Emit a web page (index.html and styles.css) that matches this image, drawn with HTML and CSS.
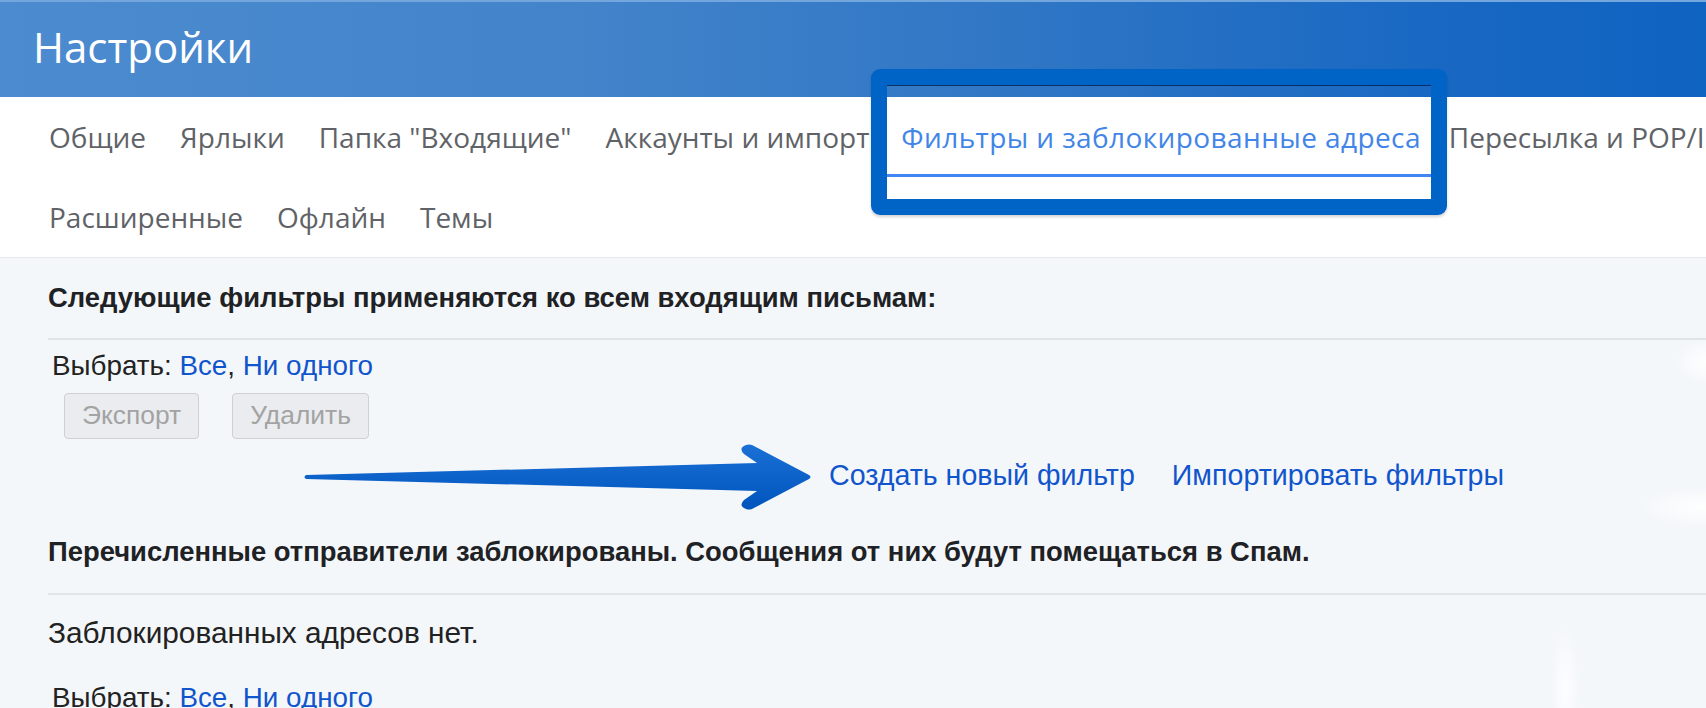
FILE: index.html
```html
<!DOCTYPE html>
<html lang="ru">
<head>
<meta charset="utf-8">
<title>Настройки</title>
<link rel="stylesheet" href="styles.css">
</head>
<body>
<div class="page">
  <header class="topbar">
    <h1 class="title">Настройки</h1>
  </header>
  <nav class="tabs">
    <div class="tab-row">
      <span class="tab">Общие</span>
      <span class="tab">Ярлыки</span>
      <span class="tab">Папка "Входящие"</span>
      <span class="tab">Аккаунты и импорт</span>
      <span class="tab active">Фильтры и заблокированные адреса</span>
      <span class="tab">Пересылка и POP/IMAP</span>
      <span class="tab">Чат и Meet</span>
    </div>
    <div class="tab-row">
      <span class="tab">Расширенные</span>
      <span class="tab">Офлайн</span>
      <span class="tab">Темы</span>
    </div>
  </nav>
  <main class="content">
    <section class="block">
      <h2 class="block-title">Следующие фильтры применяются ко всем входящим письмам:</h2>
      <div class="select">Выбрать: <a class="link">Все</a>, <a class="link">Ни одного</a></div>
      <div class="actions">
        <button class="btn" disabled>Экспорт</button>
        <button class="btn" disabled>Удалить</button>
      </div>
      <div class="links">
        <a class="link">Создать новый фильтр</a>
        <a class="link">Импортировать фильтры</a>
      </div>
    </section>
    <section class="block second">
      <h2 class="block-title">Перечисленные отправители заблокированы. Сообщения от них будут помещаться в Спам.</h2>
      <div class="empty">Заблокированных адресов нет.</div>
      <div class="select last">Выбрать: <a class="link">Все</a>, <a class="link">Ни одного</a></div>
    </section>
  </main>

  <div class="highlight"></div>
  <svg class="arrow" width="520" height="80" viewBox="0 0 520 80" aria-hidden="true">
    <defs>
      <linearGradient id="ag" x1="0" y1="0" x2="0" y2="1">
        <stop offset="0" stop-color="#1b70d6"/>
        <stop offset="1" stop-color="#0055bd"/>
      </linearGradient>
    </defs>
    <path fill="url(#ag)" d="M6,37 L457,25 L444,16 Q438,10 446,7 Q449,6 452,7 L509,37 Q512,39 509,41 L452,71 Q449,72 446,71 Q438,68 444,62 L457,53 L6,41 Q3,39 6,37 Z"/>
  </svg>
</div>
</body>
</html>
```

FILE: styles.css
```css
html, body {
  margin: 0;
  padding: 0;
}

body {
  width: 1706px;
  height: 708px;
  overflow: hidden;
  background: #f4f7fa;
  font-family: "Liberation Sans", Arial, Helvetica, sans-serif;
}

.page {
  position: relative;
  width: 1706px;
  height: 708px;
  overflow: hidden;
}

.topbar {
  height: 97px;
  box-sizing: border-box;
  padding: 26px 0 0 33px;
  background: linear-gradient(90deg, #4c8bcf 0%, #4283ca 35%, #2f76c5 60%, #1a69c3 82%, #0f63c1 100%);
  border-top: 2px solid #73a6dc;
}

.title {
  margin: -2px 0 0;
  font-family: "Open Sans", Roboto, sans-serif;
  font-weight: 400;
  font-size: 42px;
  line-height: 42px;
  color: #ffffff;
}

.tabs {
  background: #ffffff;
  padding-left: 32px;
  box-shadow: 0 1px 0 #e6e9ed;
  position: relative;
}

.tab-row {
  display: flex;
  height: 80px;
  white-space: nowrap;
}

.tab {
  flex: none;
  padding: 0 17px;
  font-family: "Open Sans", Roboto, sans-serif;
  font-size: 28px;
  line-height: 80px;
  color: #5f6368;
}

.tab.active {
  padding: 0 11px 0 15px;
  letter-spacing: 0.4px;
  color: #4285e8;
  box-shadow: inset 0 -3px 0 #4285f4;
}

.content {
  padding-left: 48px;
  height: 451px;
  background:
    radial-gradient(ellipse 30px 22px at 1706px 105px, rgba(255,255,255,0.95), rgba(255,255,255,0) 100%),
    radial-gradient(ellipse 60px 20px at 1700px 250px, rgba(255,255,255,0.9), rgba(255,255,255,0) 100%),
    radial-gradient(ellipse 14px 60px at 1565px 430px, rgba(255,255,255,0.8), rgba(255,255,255,0) 100%),
    #f4f7fa;
}

.block-title {
  margin: 0;
  padding: 24.5px 0 24.5px;
  font-size: 27.4px;
  line-height: 32px;
  font-weight: 700;
  color: #202124;
  border-bottom: 2px solid #e0e3e7;
  white-space: nowrap;
}

.second .block-title {
  padding-top: 45.5px;
}

.select {
  margin-top: 10.4px;
  padding-left: 4px;
  font-size: 27.8px;
  line-height: 32px;
  color: #222222;
}

.select.last {
  margin-top: 33.7px;
}

.link {
  color: #1155cc;
  text-decoration: none;
}

.actions {
  display: flex;
  gap: 33px;
  margin-top: 10.6px;
  margin-left: 16px;
}

.btn {
  height: 46px;
  padding: 0 17px;
  font-family: "Liberation Sans", Arial, sans-serif;
  font-size: 26.4px;
  color: #a3a3a3;
  background: #eaecef;
  border: 1px solid #cdd0d4;
  border-radius: 4px;
}

.links {
  display: flex;
  gap: 37px;
  margin-top: 20px;
  padding-left: 781px;
  font-size: 28.6px;
  line-height: 32px;
}

.empty {
  margin-top: 21.7px;
  font-size: 29.8px;
  line-height: 32px;
  color: #222222;
}

.highlight {
  position: absolute;
  left: 871px;
  top: 69px;
  width: 576px;
  height: 146px;
  box-sizing: border-box;
  border: 16px solid #0063c6;
  border-radius: 9px;
  box-shadow: 0 2px 3px rgba(0, 0, 0, 0.18), inset 0 1px 0 rgba(0, 20, 60, 0.7);
}

.arrow {
  position: absolute;
  left: 300px;
  top: 438px;
}
```
